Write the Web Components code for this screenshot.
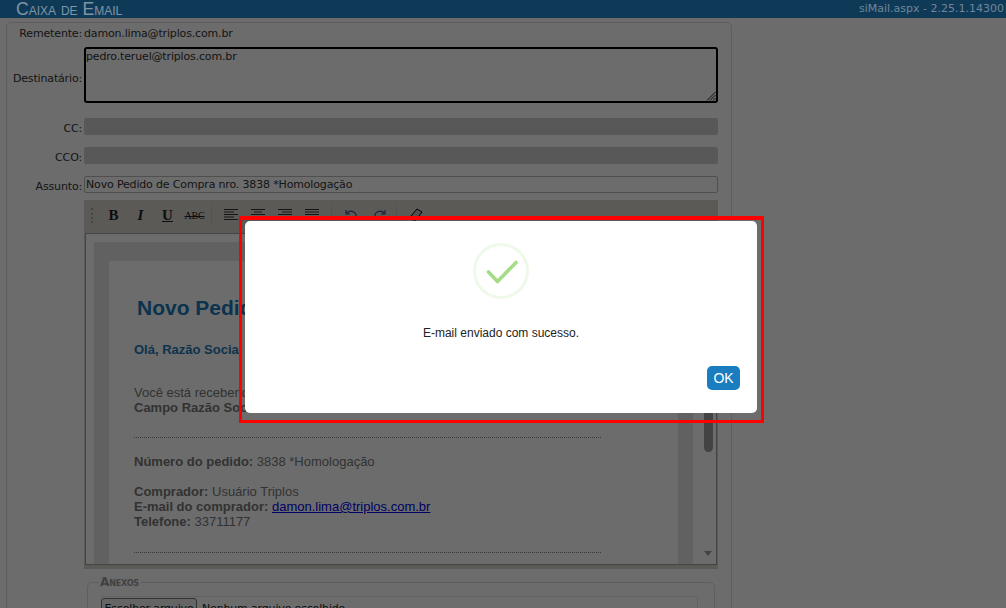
<!doctype html>
<html lang="pt-BR">
<head>
<meta charset="utf-8">
<title>Caixa de Email</title>
<style>
html, body { margin: 0; height: 100%; overflow: hidden; background: #fff; }
</style>
</head>
<body>
<mail-app>
	<mail-header slot="header" version="siMail.aspx - 2.25.1.14300">Caixa de Email</mail-header>
	<mail-row label="Remetente:" kind="static">damon.lima@triplos.com.br</mail-row>
	<mail-row label="Destinatário:" kind="focus">pedro.teruel@triplos.com.br</mail-row>
	<mail-row label="CC:" kind="disabled"></mail-row>
	<mail-row label="CCO:" kind="disabled"></mail-row>
	<mail-row label="Assunto:" kind="input">Novo Pedido de Compra nro. 3838 *Homologação</mail-row>
	<mail-editor></mail-editor>
	<mail-attachments></mail-attachments>
	<alert-dialog slot="overlay" message="E-mail enviado com sucesso." action="OK"></alert-dialog>
</mail-app>

<script>
const define = (name, markup, setup) => {
	const tpl = document.createElement('template')
	tpl.innerHTML = markup
	customElements.define(name, class extends HTMLElement {
		constructor() {
			super()
			this.attachShadow({mode: 'open'}).append(tpl.content.cloneNode(true))
		}
		connectedCallback() {
			if (setup) setup(this, this.shadowRoot)
		}
	})
}

define('mail-app', `<style>
:host {
	display: block;
	position: relative;
	width: 1006px;
	height: 608px;
	overflow: hidden;
	font: 11px "DejaVu Sans", sans-serif;
	letter-spacing: -.16px;
	color: #333;
}
#panel {
	display: flex;
	flex-direction: column;
	margin: 4px 0 0 6px;
	width: 726px;
	height: 700px;
	box-sizing: border-box;
	border: 1px solid #ddd;
	border-radius: 5px;
	padding: 3px 13px 0 0;
}
</style>
<slot name="header"></slot>
<section id="panel"><slot></slot></section>
<slot name="overlay"></slot>`)

/* sits above the dimming layer: its text is lighter than the overlay would allow */
define('mail-header', `<style>
:host {
	display: flex;
	justify-content: space-between;
	align-items: center;
	position: relative;
	z-index: 1;
	height: 18px;
	padding: 0 2px 0 16px;
	background: #0f3a57;
	overflow: hidden;
}
#title { font: 17.6px/18px "Liberation Sans", sans-serif; font-variant: small-caps; letter-spacing: 0; color: #7f95a5; }
#version { font: 11px/18px "DejaVu Sans", sans-serif; letter-spacing: 0; color: #708698; }
</style>
<div id="title"><slot></slot></div>
<div id="version"></div>`, (el, root) => {
	root.getElementById('version').textContent = el.getAttribute('version')
})

define('mail-row', `<style>
:host {
	display: grid;
	grid-template-columns: 75px 1fr;
	column-gap: 2px;
	align-items: center;
	margin-bottom: 12px;
}
:host([kind=static]) { height: 15px; margin-bottom: 6px; }
:host([kind=focus]) { margin-bottom: 15px; }
:host([kind=input]) { margin-bottom: 7px; }
#label { text-align: right; white-space: nowrap; padding-top: 3px; }
:host([kind=static]) #label { padding-top: 0; }
:host([kind=focus]) #label { padding-top: 6px; }
#field { box-sizing: border-box; white-space: nowrap; line-height: 15px; }
:host([kind=focus]) #field {
	position: relative;
	height: 56px;
	border: 2px solid #000;
	border-radius: 3px;
	line-height: 15px;
}
:host([kind=disabled]) #field { height: 17px; background: #d1d1d1; border-radius: 2px; }
:host([kind=input]) #field {
	height: 17px;
	border: 1px solid #bbb;
	border-radius: 2px;
	padding-left: 1px;
	line-height: 16px;
}
svg { position: absolute; right: 0; bottom: 0; display: none; }
:host([kind=focus]) svg { display: block; }
</style>
<div id="label"></div>
<div id="field"><slot></slot><svg width="10" height="10" viewBox="0 0 10 10"><path d="M9.5 1 1 9.5M9.5 4 4 9.5M9.5 7 7 9.5" stroke="#222" fill="none"/></svg></div>`, (el, root) => {
	root.getElementById('label').textContent = el.getAttribute('label')
})

define('mail-toolbar', `<style>
:host {
	display: flex;
	align-items: center;
	height: 33px;
	box-sizing: border-box;
	padding: 0 0 3px 7px;
}
#grip { width: 2px; height: 15px; margin-right: 7px; border-left: 2px dotted #a5a396; box-sizing: border-box; }
.tool { display: flex; align-items: center; justify-content: center; width: 27px; height: 18px; flex: none; color: #222; }
.txt { font: bold 15px "Liberation Serif", serif; letter-spacing: 0; }
.abc { font-size: 10px; font-weight: normal; text-decoration: line-through; letter-spacing: -.2px; }
.sep { width: 1px; height: 20px; background: #c9c7b9; flex: none; }
svg { display: block; }
</style>
<div id="grip"></div>
<div class="tool txt">B</div>
<div class="tool txt" style="font-style: italic">I</div>
<div class="tool txt" style="text-decoration: underline">U</div>
<div class="tool txt abc">ABC</div>
<div class="sep" style="margin: 0 6px 0 3px"></div>
<div class="tool"><svg width="15" height="12"><path d="M0 .5h14M0 3h10M0 5.500h14M0 8h10M0 10.500h14" stroke="#333"/></svg></div>
<div class="tool"><svg width="15" height="12"><path d="M0 .5h14M3 3h8M0 5.500h14M3 8h8M0 10.500h14" stroke="#333"/></svg></div>
<div class="tool"><svg width="15" height="12"><path d="M0 .5h14M4 3h10M0 5.500h14M4 8h10M0 10.500h14" stroke="#333"/></svg></div>
<div class="tool"><svg width="15" height="12"><path d="M0 .5h14M0 3h14M0 5.500h14M0 8h14M0 10.500h14" stroke="#333"/></svg></div>
<div class="sep" style="margin: 0 6px 0 5px"></div>
<div class="tool"><svg width="16" height="14"><path d="M3 5a5 4 0 1 1 2 6M2 2v4h4" stroke="#3a4a8c" stroke-width="1.2" fill="none"/></svg></div>
<div class="tool"><svg width="16" height="14"><path d="M13 5a5 4 0 1 0-2 6M14 2v4h-4" stroke="#3a4a8c" stroke-width="1.2" fill="none"/></svg></div>
<div class="sep" style="margin: 0 11px 0 4px"></div>
<div class="tool" style="width: 16px"><svg width="16" height="16"><path d="M3 9 9 2l5 3-6 8H5z" stroke="#000" fill="#bbb"/><path d="M3 15h10" stroke="#000"/></svg></div>`)

define('mail-editor', `<style>
:host {
	display: block;
	height: 369px;
	margin-left: 77px;
	background: #d6d4cc;
}
#frame {
	position: relative;
	height: 332px;
	margin: 0 1px 0 1px;
	box-sizing: border-box;
	border: 1px solid #a0a0a0;
	background: #fff;
	overflow: hidden;
	display: grid;
	grid-template-columns: 1fr 23px;
	letter-spacing: 0;
}
#band { margin: 8px 0 0 8px; padding: 19px 15px 0; background: #e4e4e4; }
#card {
	height: 340px;
	background: #fff;
	padding: 35px 0 0 25px;
	font: 13px/15px "Liberation Sans", sans-serif;
	color: #777;
}
h1 { margin: 0 0 0 3px; font: bold 21px/24px "Liberation Sans", sans-serif; color: #1b78b8; }
h2 { margin: 22px 0 0; font: bold 13px/16px "Liberation Sans", sans-serif; color: #2478b4; }
p { margin: 0; }
hr { width: 467px; margin: 22px 0 16px; border: 0; border-top: 1px dotted #888; }
hr.last { margin-top: 23px; }
a { color: #00e; }
#bar { position: relative; }
#thumb { position: absolute; top: -30px; left: 11px; width: 9px; height: 248px; border-radius: 5px; background: #9e9e9e; }
#arrow { position: absolute; left: 11px; top: 317px; width: 0; height: 0; border: 4.5px solid transparent; border-top: 5px solid #9e9e9e; border-bottom: 0; }
</style>
<mail-toolbar></mail-toolbar>
<div id="frame">
	<div id="band"><div id="card">
		<h1>Novo Pedido de Compra</h1>
		<h2>Olá, Razão Social</h2>
		<p style="margin-top:27px">Você está recebendo este e-mail</p>
		<p><b>Campo Razão Social</b></p>
		<hr>
		<p><b>Número do pedido:</b> 3838 *Homologação</p>
		<p style="margin-top:15px"><b>Comprador:</b> Usuário Triplos</p>
		<p><b>E-mail do comprador:</b> <a href="#">damon.lima@triplos.com.br</a></p>
		<p><b>Telefone:</b> 33711177</p>
		<hr class="last">
	</div></div>
	<div id="bar"><div id="thumb"></div><div id="arrow"></div></div>
</div>`)

define('mail-attachments', `<style>
:host { display: block; margin: 6px 3px 0 80px; }
fieldset {
	margin: 0;
	padding: 7px 16px 0 13px;
	border: 1px solid #ddd;
	border-radius: 5px;
	height: 60px;
}
legend { margin-left: -2px; padding: 0 1px; font: bold 12px "DejaVu Sans", sans-serif; font-variant: small-caps; color: #999; }
#box { display: flex; align-items: center; gap: 5px; padding-top: 1px; border: 1px solid #e8e8e8; border-width: 1px 1px 0 0; color: #222; }
button { font: 11px "DejaVu Sans", sans-serif; letter-spacing: -.16px; height: 21px; width: 96px; padding: 0; background: #efefef; border: 1px solid #767676; border-radius: 3px; color: #222; }
</style>
<fieldset>
	<legend>Anexos</legend>
	<div id="box"><button type="button">Escolher arquivo</button><span>Nenhum arquivo escolhido</span></div>
</fieldset>`)

define('alert-dialog', `<style>
:host {
	position: absolute;
	inset: 0;
	background: rgba(0, 0, 0, .575);
	font-family: "Liberation Sans", sans-serif;
	letter-spacing: 0;
}
#mark {
	position: absolute;
	left: 239px;
	top: 216px;
	width: 525px;
	height: 207px;
	box-sizing: border-box;
	border: 3px solid #f00;
	border-top-width: 4px;
}
#dialog {
	position: absolute;
	left: 245px;
	top: 221px;
	width: 512px;
	height: 192px;
	box-sizing: border-box;
	display: flex;
	flex-direction: column;
	align-items: center;
	padding: 22px 17px 23px;
	background: #fff;
	border-radius: 5px;
}
svg { display: block; }
#text { margin-top: 27px; font-size: 12px; line-height: 14px; color: #222; }
button {
	align-self: flex-end;
	margin-top: auto;
	width: 33px;
	height: 24px;
	padding: 0;
	border: 0;
	border-radius: 5px;
	background: #1a7dc0;
	color: #fff;
	font: 14px "Liberation Sans", sans-serif;
}
</style>
<div id="mark"></div>
<div id="dialog" role="alertdialog">
	<svg width="56" height="56" viewBox="0 0 56 56">
		<circle cx="28" cy="28" r="26.5" fill="none" stroke="#a5dc86" stroke-opacity=".18" stroke-width="3"/>
		<path d="M15.5 29 24.5 38.500 43 19.500" fill="none" stroke="#a5dc86" stroke-width="3.6" stroke-linecap="round" stroke-linejoin="round"/>
	</svg>
	<div id="text"></div>
	<button type="button"></button>
</div>`, (el, root) => {
	root.getElementById('text').textContent = el.getAttribute('message')
	root.querySelector('button').textContent = el.getAttribute('action')
})
</script>
</body>
</html>
